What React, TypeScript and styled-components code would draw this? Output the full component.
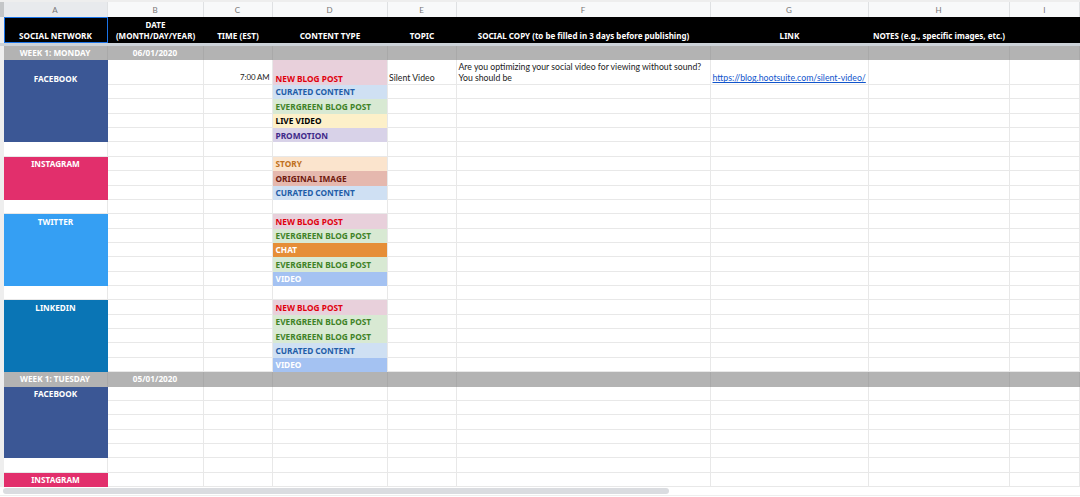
import React from "react";
import styled, { createGlobalStyle } from "styled-components";

const Global = createGlobalStyle`
  html, body { margin: 0; padding: 0; background: #fff; overflow: hidden; height: 497px; }
  body { font-family: "Lato", "Liberation Sans", sans-serif; }
`;

const Page = styled.div`
  width: 1080px;
  height: 497px;
  overflow: hidden;
  box-sizing: border-box;
  background: #fff;
  border-top: 2px solid #eeeeee;
`;

const Sheet = styled.div`
  display: grid;
  grid-template-columns: 3.5px 104px 96px 69px 115px 69px 254px 158px 141px 70.5px;
  grid-template-rows: 15px 26px 3px 14.4px 24.6px;
  grid-auto-rows: 14.37px;
`;

const Corner = styled.div<{ $dark?: boolean }>`
  background: ${(p) => (p.$dark ? "#c4c6c8" : "#eeeeee")};
`;

const ColHead = styled.div<{ $active?: boolean }>`
  background: ${(p) => (p.$active ? "#e8eaed" : "#f8f9fa")};
  border-right: 1px solid #dfe1e3;
  color: #777777;
  font: 8px/16px "Lato", sans-serif;
  text-align: center;
`;

const HeadCell = styled.div<{ $selected?: boolean; $narrow?: boolean }>`
  background: #000;
  color: #fff;
  font: 700 ${(p) => (p.$narrow ? "8px" : "8.2px")}/11px "Noto Sans", sans-serif;
  text-align: center;
  display: flex;
  align-items: flex-end;
  justify-content: center;
  white-space: nowrap;
  padding-bottom: 2px;
  box-sizing: border-box;
  ${(p) => p.$selected && "outline: 1px solid #1a73e8; outline-offset: -1px;"}
`;

const Divider = styled.div`
  grid-column: 1 / -1;
  background: #ccd2d8;
`;

const WeekCell = styled.div`
  background: #b3b3b3;
  border-right: 1px solid #a9a9a9;
  color: #fff;
  font: 700 8.2px/14px "Noto Sans", sans-serif;
  text-align: center;
  white-space: nowrap;
`;

const NetworkCell = styled.div<{ $bg: string; $span: number; $tall?: boolean }>`
  grid-row: span ${(p) => p.$span};
  background: ${(p) => p.$bg};
  color: #fff;
  font: 700 8.2px/14px "Noto Sans", sans-serif;
  text-align: center;
  padding-top: ${(p) => (p.$tall ? "11.5px" : "0.5px")};
`;

const Cell = styled.div`
  border-right: 1px solid #e8e8e8;
  border-bottom: 1px solid #e8e8e8;
  box-sizing: border-box;
  color: #222;
  font: 8.7px/11px "Lato", sans-serif;
  display: flex;
  align-items: flex-end;
  padding: 0 2px 0.5px;
  white-space: nowrap;
  min-width: 0;
`;

const TopicCell = styled(Cell)`
  padding-left: 1.5px;
`;

const TimeCell = styled(Cell)`
  justify-content: flex-end;
  font-size: 7.9px;
  letter-spacing: -0.1px;
`;

const TypeCell = styled.div<{ $bg: string; $fg: string }>`
  background: ${(p) => p.$bg};
  color: ${(p) => p.$fg};
  border-right: 1px solid #e8e8e8;
  box-sizing: border-box;
  font: 700 8.3px/14px "Noto Sans", sans-serif;
  padding: 0.5px 0 0 3px;
  display: flex;
  align-items: flex-start;
  white-space: nowrap;
`;

const TallType = styled(TypeCell)`
  align-items: flex-end;
  line-height: 13px;
  padding-top: 0;
`;

const Link = styled.span`
  color: #1155cc;
  text-decoration: underline;
  font-size: 8.75px;
`;

const ScrollTrack = styled.div`
  height: 7px;
  margin-top: 1px;
  padding-left: 3px;
  border-bottom: 1px solid #eeeeee;
`;

const ScrollThumb = styled.div`
  width: 666px;
  height: 6px;
  border-radius: 3px;
  background: #dadce0;
`;

const letters = ["A", "B", "C", "D", "E", "F", "G", "H", "I"];
const heads = [
  "SOCIAL NETWORK",
  "",
  "TIME (EST)",
  "CONTENT TYPE",
  "TOPIC",
  "SOCIAL COPY (to be filled in 3 days before publishing)",
  "LINK",
  "NOTES (e.g., specific images, etc.)",
  "",
];

const T: Record<string, [string, string, string]> = {
  neu: ["NEW BLOG POST", "#e8d0db", "#e0000f"],
  cur: ["CURATED CONTENT", "#cfe0f3", "#1f5ea8"],
  eve: ["EVERGREEN BLOG POST", "#d8e9d3", "#3f8327"],
  liv: ["LIVE VIDEO", "#fdf0c9", "#000000"],
  pro: ["PROMOTION", "#d8d2e8", "#3f2a8a"],
  sto: ["STORY", "#fbe4cd", "#bf7020"],
  ori: ["ORIGINAL IMAGE", "#e5b8ae", "#6f1a0e"],
  cha: ["CHAT", "#e68e37", "#ffffff"],
  vid: ["VIDEO", "#a4c2f2", "#ffffff"],
};

type Group = { name: string; bg: string; types: string[] };

const day1: Group[] = [
  { name: "FACEBOOK", bg: "#3b5795", types: ["neu", "cur", "eve", "liv", "pro"] },
  { name: "INSTAGRAM", bg: "#e22f6c", types: ["sto", "ori", "cur"] },
  { name: "TWITTER", bg: "#359ff3", types: ["neu", "eve", "cha", "eve", "vid"] },
  { name: "LINKEDIN", bg: "#0a75b5", types: ["neu", "eve", "eve", "cur", "vid"] },
];

const Blanks = ({ n }: { n: number }) => (
  <>
    {Array.from({ length: n }, (_, i) => (
      <Cell key={i} />
    ))}
  </>
);

const Week = ({ label, date }: { label: string; date: string }) => (
  <>
    <Corner />
    <WeekCell>{label}</WeekCell>
    <WeekCell>{date}</WeekCell>
    {Array.from({ length: 7 }, (_, i) => (
      <WeekCell key={i} />
    ))}
  </>
);

const GroupRows = ({ g, first }: { g: Group; first?: boolean }) => (
  <>
    {g.types.map((t, i) => {
      const [label, bg, fg] = T[t];
      const tall = first && i === 0;
      return (
        <React.Fragment key={i}>
          <Corner />
          {i === 0 && (
            <NetworkCell $bg={g.bg} $span={g.types.length} $tall={tall}>
              {g.name}
            </NetworkCell>
          )}
          <Cell />
          {tall ? <TimeCell>7:00 AM</TimeCell> : <Cell />}
          {tall ? (
            <TallType $bg={bg} $fg={fg}>{label}</TallType>
          ) : (
            <TypeCell $bg={bg} $fg={fg}>{label}</TypeCell>
          )}
          {tall ? (
            <>
              <TopicCell>Silent Video</TopicCell>
              <Cell>
                Are you optimizing your social video for viewing without sound?
                <br />
                You should be
              </Cell>
              <Cell>
                <Link>https://blog.hootsuite.com/silent-video/</Link>
              </Cell>
              <Blanks n={2} />
            </>
          ) : (
            <Blanks n={5} />
          )}
        </React.Fragment>
      );
    })}
  </>
);

const BlankRow = () => (
  <>
    <Corner />
    <Blanks n={9} />
  </>
);

export default function App() {
  return (
    <Page>
      <Global />
      <Sheet>
        <Corner $dark />
        {letters.map((l, i) => (
          <ColHead key={l} $active={i === 0}>{l}</ColHead>
        ))}
        <Corner />
        {heads.map((h, i) => (
          <HeadCell key={i} $selected={i === 0} $narrow={i === 1 || i === 5 || i === 7}>
            {i === 1 ? (
              <span>DATE<br />(MONTH/DAY/YEAR)</span>
            ) : (
              h
            )}
          </HeadCell>
        ))}
        <Divider />
        <Week label="WEEK 1: MONDAY" date="06/01/2020" />
        {day1.map((g, i) => (
          <React.Fragment key={g.name}>
            <GroupRows g={g} first={i === 0} />
            {i < day1.length - 1 && <BlankRow />}
          </React.Fragment>
        ))}
        <Week label="WEEK 1: TUESDAY" date="05/01/2020" />
        <Corner />
        <NetworkCell $bg="#3b5795" $span={5}>FACEBOOK</NetworkCell>
        <Blanks n={8} />
        {[0, 1, 2, 3].map((i) => (
          <React.Fragment key={i}>
            <Corner />
            <Blanks n={8} />
          </React.Fragment>
        ))}
        <BlankRow />
        <Corner />
        <NetworkCell $bg="#e22f6c" $span={1}>INSTAGRAM</NetworkCell>
        <Blanks n={8} />
      </Sheet>
      <ScrollTrack>
        <ScrollThumb />
      </ScrollTrack>
    </Page>
  );
}
